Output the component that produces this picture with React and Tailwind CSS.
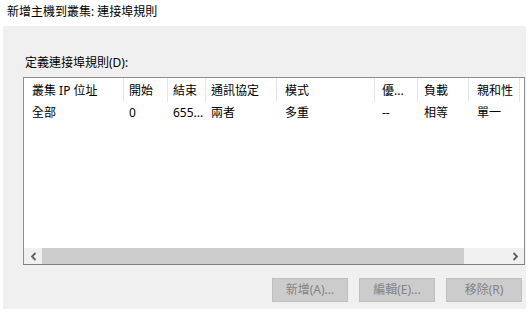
import React from 'react';

const columns = [
  { label: '叢集 IP 位址', value: '全部', w: 'w-[100px]', pl: 'pl-[8px]' },
  { label: '開始', value: '0', w: 'w-[44px]', pl: 'pl-[5px]' },
  { label: '結束', value: '655...', w: 'w-[38px]', pl: 'pl-[5px]' },
  { label: '通訊協定', value: '兩者', w: 'w-[71px]', pl: 'pl-[5px]' },
  { label: '模式', value: '多重', w: 'w-[98px]', pl: 'pl-[8px]' },
  { label: '優...', value: '--', w: 'w-[43px]', pl: 'pl-[7px]' },
  { label: '負載', value: '相等', w: 'w-[51px]', pl: 'pl-[6px]' },
  { label: '親和性', value: '單一', w: 'w-[51px]', pl: 'pl-[8px]' },
];

function Chevron({ dir }) {
  return (
    <svg width="7" height="9" viewBox="0 0 7 9">
      <path
        d={dir === 'left' ? 'M5.5 1 L2 4.5 L5.5 8' : 'M1.5 1 L5 4.5 L1.5 8'}
        fill="none"
        stroke="#606060"
        strokeWidth="1.8"
      />
    </svg>
  );
}

export default function App() {
  return (
    <div className="w-[529px] h-[312px] bg-white text-[12px] text-black font-['Noto_Sans','Noto_Sans_CJK_TC',sans-serif] overflow-hidden">
      {/* Title */}
      <div className="h-[26px] pl-[7px] pt-[3px] leading-[18px]">新增主機到叢集: 連接埠規則</div>

      {/* Panel */}
      <div className="ml-[3px] w-[523px] h-[283px] bg-[#f0f0f0] pt-[29px]">
        <div className="ml-[22px] leading-[16px] h-[16px]">定義連接埠規則(D):</div>

        {/* List */}
        <div className="ml-[20px] mt-[6px] w-[502px] h-[188px] border border-[#8f8f8f] border-b-[#7f7f7f] bg-white flex flex-col">
          <div className="h-[24px] flex shrink-0">
            {columns.map((c) => (
              <div
                key={c.label}
                className={`${c.w} ${c.pl} pt-[2px] border-r border-[#e5e5e5] leading-[22px] whitespace-nowrap overflow-hidden`}
              >
                {c.label}
              </div>
            ))}
          </div>
          <div className="flex-1 pt-[2px]">
            <div className="flex h-[17px]">
              {columns.map((c) => (
                <div key={c.label} className={`${c.w} ${c.pl} pr-px leading-[17px] whitespace-nowrap`}>
                  {c.value}
                </div>
              ))}
            </div>
          </div>
          {/* Horizontal scrollbar */}
          <div className="h-[16px] flex shrink-0 bg-[#f0f0f0]">
            <div className="w-[18px] flex items-center justify-center">
              <Chevron dir="left" />
            </div>
            <div className="w-[422px] bg-[#cdcdcd]" />
            <div className="flex-1" />
            <div className="w-[18px] flex items-center justify-center">
              <Chevron dir="right" />
            </div>
          </div>
        </div>

        {/* Buttons */}
        <div className="mt-[13px] flex justify-end gap-[11px] pr-[4px]">
          {['新增(A)...', '編輯(E)...', '移除(R)'].map((b) => (
            <button
              key={b}
              disabled
              className="w-[76px] h-[24px] bg-[#cccccc] border border-[#bfbfbf] text-[#838383] leading-[22px]"
            >
              {b}
            </button>
          ))}
        </div>
      </div>
    </div>
  );
}
